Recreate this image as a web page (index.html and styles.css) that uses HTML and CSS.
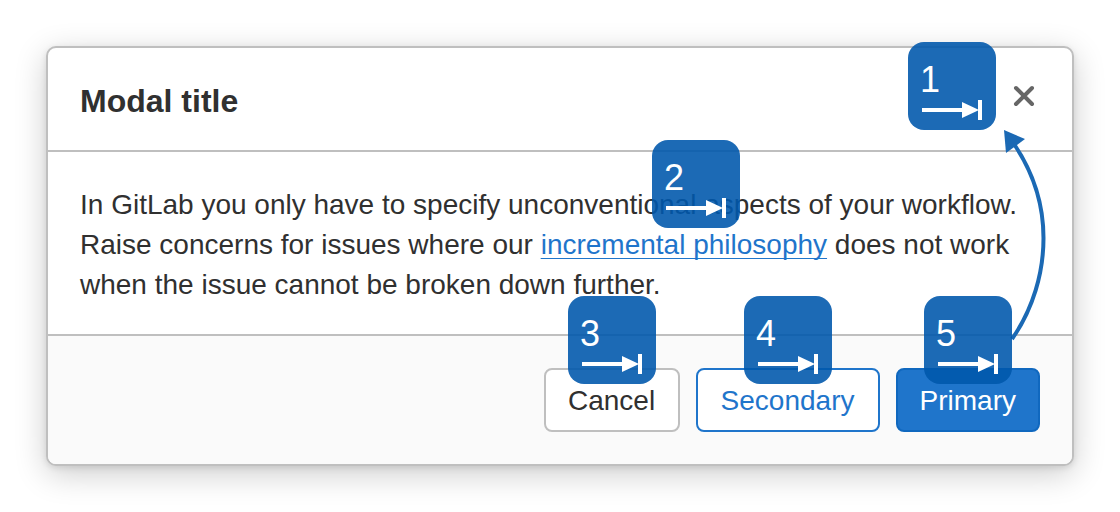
FILE: index.html
```html
<!DOCTYPE html>
<html lang="en">
<head>
<meta charset="utf-8">
<meta name="viewport" content="width=device-width, initial-scale=1">
<title>Modal focus order</title>
<link rel="stylesheet" href="styles.css">
</head>
<body>
<svg class="symbols" aria-hidden="true">
  <symbol id="tab-arrow" viewBox="0 0 60 20">
    <path d="M0 8H40V2L56 9.500V0H60V20H56V10.500L40 18V12H0Z" fill="currentColor"/>
  </symbol>
</svg>
<main class="page">
  <section class="modal" role="dialog" aria-labelledby="modal-title">
    <header class="modal-header">
      <h1 class="modal-title" id="modal-title">Modal title</h1>
      <button class="close" type="button" aria-label="Close">
        <svg class="close-icon" viewBox="0 0 32 32" aria-hidden="true"><path d="M8 8L24 24M24 8L8 24"/></svg>
      </button>
    </header>
    <div class="modal-body">
      <p class="modal-text">In GitLab you only have to specify unconventional aspects of your workflow. Raise concerns for issues where our <a class="link" href="#philosophy">incremental philosophy</a> does not work when the issue cannot be broken down further.</p>
    </div>
    <footer class="modal-footer">
      <button class="btn" type="button">Cancel</button>
      <button class="btn btn-secondary" type="button">Secondary</button>
      <button class="btn btn-primary" type="button">Primary</button>
    </footer>
    <svg class="return-path" viewBox="0 0 48 220" aria-hidden="true">
      <path class="return-line" d="M12 213C33 183 43.500 147 43.500 112C43.500 78 33 46 14 18"/>
      <path class="return-head" d="M4 4L25 13L6 27Z"/>
    </svg>
    <div class="stop stop-close"><span class="stop-number">1</span><svg class="stop-arrow" aria-hidden="true"><use href="#tab-arrow"/></svg></div>
    <div class="stop stop-link"><span class="stop-number">2</span><svg class="stop-arrow" aria-hidden="true"><use href="#tab-arrow"/></svg></div>
    <div class="stop stop-cancel"><span class="stop-number">3</span><svg class="stop-arrow" aria-hidden="true"><use href="#tab-arrow"/></svg></div>
    <div class="stop stop-secondary"><span class="stop-number">4</span><svg class="stop-arrow" aria-hidden="true"><use href="#tab-arrow"/></svg></div>
    <div class="stop stop-primary"><span class="stop-number">5</span><svg class="stop-arrow" aria-hidden="true"><use href="#tab-arrow"/></svg></div>
  </section>
</main>
</body>
</html>
```
FILE: styles.css
```css
* { box-sizing: border-box; }

body {
  margin: 0;
  background: #fff;
  color: #303030;
  font-family: "Liberation Sans", Arial, sans-serif;
  font-size: 28px;
  line-height: 40px;
}

.symbols { position: absolute; width: 0; height: 0; }

.page { padding: 46px; }

.modal {
  position: relative;
  border: 2px solid #bfbfbf;
  border-radius: 10px;
  background: #fff;
  box-shadow: 0 8px 32px rgba(0, 0, 0, 0.2), 0 2px 6px rgba(0, 0, 0, 0.1);
}

.modal-header {
  display: flex;
  align-items: flex-start;
  justify-content: space-between;
  padding: 32px 32px 28px;
  border-bottom: 2px solid #bfbfbf;
}

.modal-title { margin: 0; font-size: 32px; line-height: 42px; }

.close {
  display: flex;
  padding: 0;
  border: 0;
  background: none;
  color: #666;
}

.close-icon {
  width: 32px;
  height: 32px;
  fill: none;
  stroke: currentColor;
  stroke-width: 4;
  stroke-linecap: round;
}

.modal-body { padding: 33px 32px 29px; }

.modal-text { margin: 0; }

.link {
  color: #1f75cb;
  text-decoration: underline;
  text-decoration-thickness: 1px;
  text-underline-offset: 4px;
  text-decoration-skip-ink: none;
}

.modal-footer {
  display: flex;
  justify-content: flex-end;
  gap: 16px;
  padding: 32px;
  border-top: 2px solid #bfbfbf;
  border-radius: 0 0 8px 8px;
  background: #fafafa;
}

.btn {
  min-width: 136px;
  padding: 11px 22px 9px;
  border: 2px solid #bfbfbf;
  border-radius: 8px;
  background: #fff;
  color: #303030;
  font: inherit;
}

.btn-secondary { min-width: 184px; border-color: #1f75cb; color: #1f75cb; }

.btn-primary { border-color: #1068bf; background: #1f75cb; color: #fff; }

/* Focus order markers laid over the dialog */
.stop {
  position: absolute;
  display: flex;
  flex-direction: column;
  width: 88px;
  height: 88px;
  padding: 18px 12px 10px;
  border-radius: 16px;
  background: rgba(0, 88, 172, 0.89);
  color: #fff;
}

.stop-number { font-size: 36px; line-height: 40px; }

.stop-arrow { width: 60px; height: 20px; margin-left: 2px; }

.stop-close { top: -6px; right: 76px; }
.stop-link { top: 92px; right: 332px; }
.stop-cancel { bottom: 80px; right: 416px; }
.stop-secondary { bottom: 80px; right: 240px; }
.stop-primary { bottom: 80px; right: 60px; }

.return-path {
  position: absolute;
  top: 78px;
  right: 24px;
  width: 48px;
  height: 220px;
}

.return-line { fill: none; stroke: #1b69b4; stroke-width: 4; }
.return-head { fill: #1b69b4; }
```
